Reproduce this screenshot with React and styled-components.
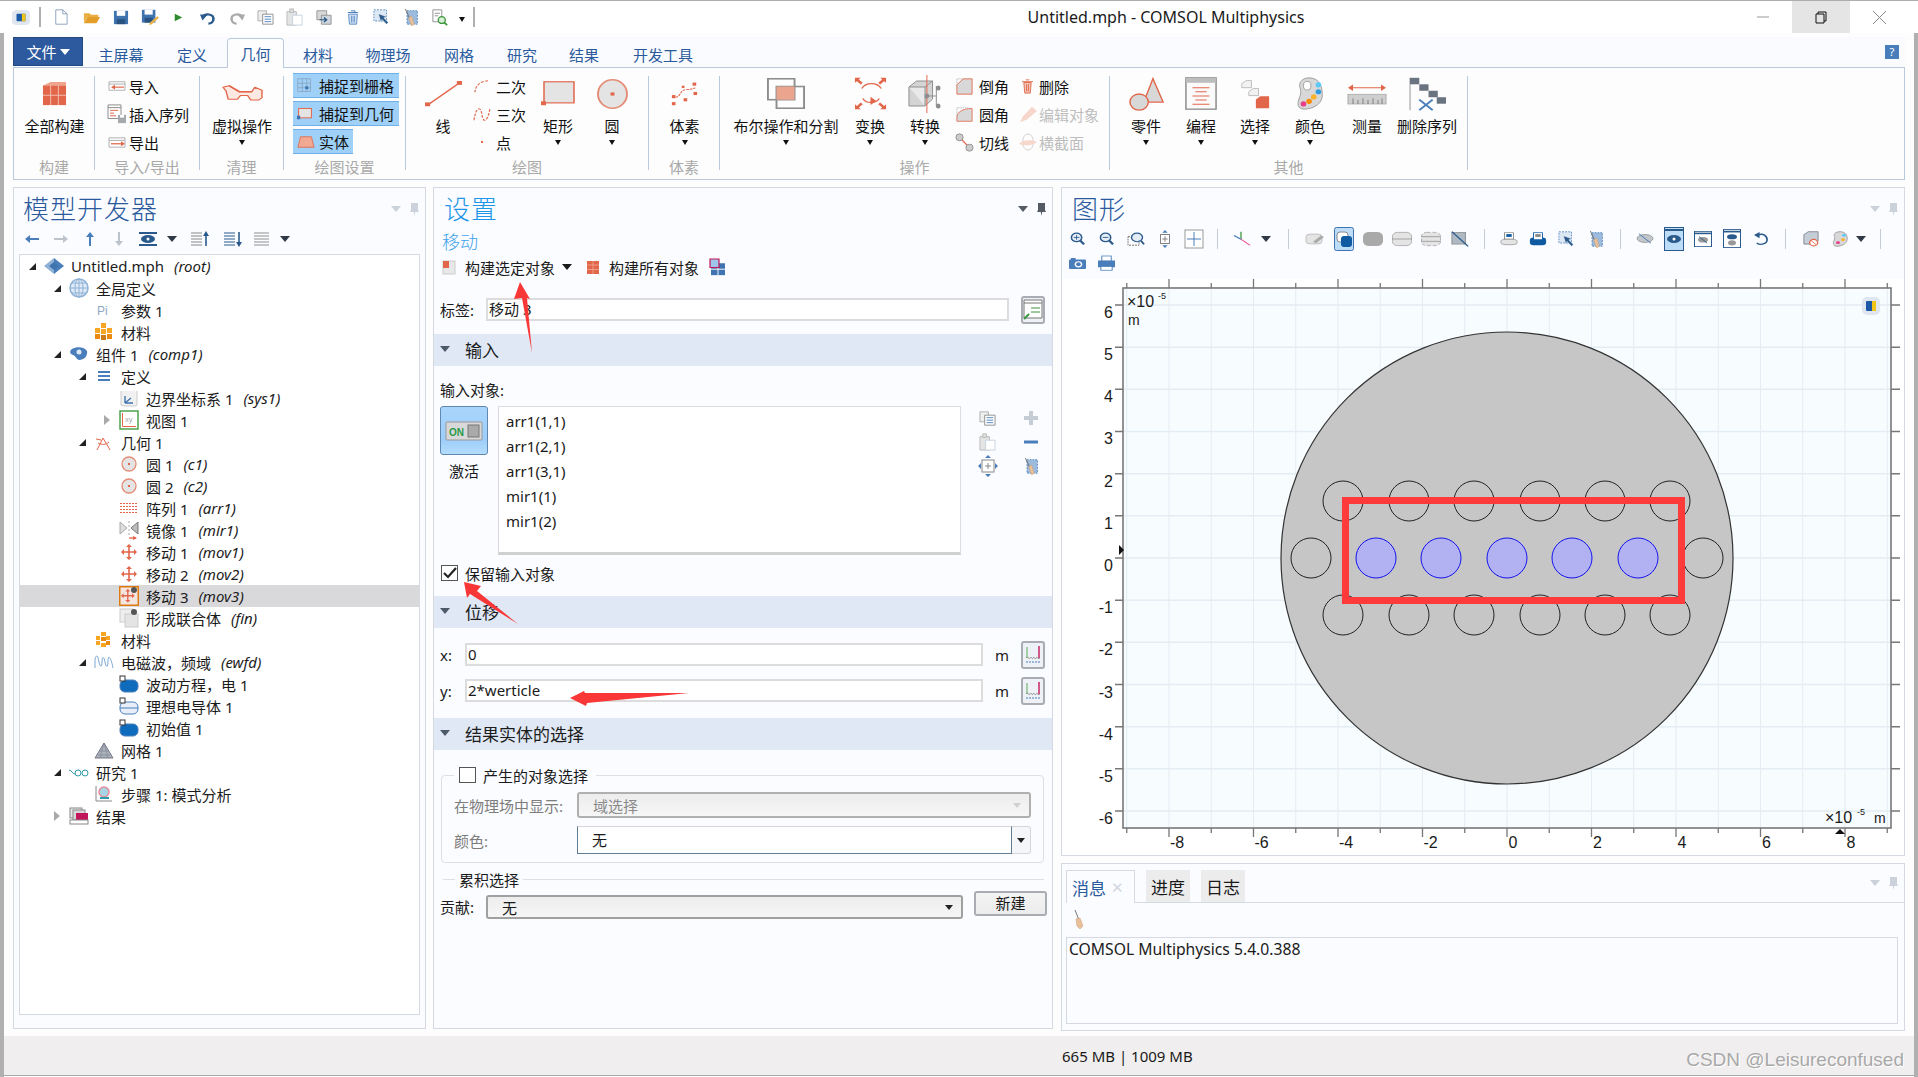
import React from 'react';
import styled, { createGlobalStyle } from 'styled-components';

const FONT = `"Noto Sans", "Noto Sans CJK SC", sans-serif`;
const R = '#e2664a';
const B = '#4a7ebb';
const DB = '#2a5a8c';

const GlobalStyle = createGlobalStyle`
  html, body { margin: 0; padding: 0; background: #fff; }
  body { font-family: ${FONT}; font-size: 15px; color: #1a1a1a; }
  * { box-sizing: border-box; }
`;

const broom = (
  <>
    <rect x="5" y="3" width="13" height="15" fill="#9dbbdc" stroke={B} strokeDasharray="2 1.5" />
    <path d="M3 1l6 12" stroke="#777" strokeWidth="1.2" />
    <path d="M7 11l4-2 3 9-3 2z" fill="#e8c09a" stroke="#c99a70" strokeWidth=".5" />
  </>
);
const cross = (
  <>
    <path d="M8 1v14M1 8h14" stroke={R} strokeWidth="1.6" />
    <path d="M8 0l3 3H5zM8 16l3-3H5zM0 8l3-3v6zM16 8l-3-3v6z" fill={R} />
  </>
);
const domain = (c, line) => (
  <>
    <rect x="1" y="4" width="18" height="12" rx="5" fill={c} stroke={B} />
    {line && <path d="M1 10h18" stroke={B} />}
    <rect x="1" y="0" width="5" height="5" fill="#fff" stroke="#333" />
  </>
);
const chip = (
  <>
    <rect x="1" y="1" width="16" height="20" rx="1" fill="#eef1f5" />
    <path d="M2 14c2-3 2 2 4 0s2 2 3 0 2 2 3 0 2 2 4 0" fill="none" stroke="#888" />
    <path d="M3 3v11" stroke="#5aa85a" />
    <path d="M15 2v12" stroke="#c2185b" strokeWidth="1.4" />
    <path d="M2 18h14" stroke={B} strokeDasharray="2 1" />
  </>
);

const icons = {
  app: [20, 20, <><rect width="20" height="20" rx="5" fill="#dfe6f0" /><rect x="5" y="5" width="10" height="10" rx="1" fill="#1c5aa8" /><path d="M11 5h4v10h-4z" fill="#f0c419" /></>],
  new: [16, 20, <path d="M2 1h8l5 5v13H2zM10 1v5h5" fill="#fff" stroke="#7f97b3" />],
  open: [20, 17, <><path d="M1 3h6l2 2h8v3H5L1 15z" fill="#eaaf44" /><path d="M5 8h14l-4 8H1z" fill="#e39e2a" /></>],
  save: [17, 18, <><path d="M1 1h15v16H1z" fill="#3f74b0" /><path d="M4 1h9v6H4z" fill="#fff" /><path d="M4 11h9v6H4z" fill="#28527f" /></>],
  saveAs: [20, 20, <><path d="M1 1h15v16H1z" fill="#3f74b0" /><path d="M4 1h9v6H4z" fill="#fff" /><path d="M4 11h9v6H4z" fill="#28527f" /><path d="M10 17l8-8 2 2-8 8-3 1z" fill="#eab04c" /></>],
  run: [12, 14, <path d="M1 1l10 6-10 6z" fill="#2e8b2e" />],
  undo: [19, 20, <><path d="M4 9c2-5 12-4 12 3 0 4-3 6-6 6" fill="none" stroke={DB} strokeWidth="3" /><path d="M0 6l9 0-6 8z" fill={DB} /></>],
  redo: [19, 20, <><path d="M15 9C13 4 3 5 3 12c0 4 3 6 6 6" fill="none" stroke="#aaa" strokeWidth="3" /><path d="M19 6h-9l6 8z" fill="#aaa" /></>],
  copy: [18, 18, <><path d="M1 1h9v12H1z" fill="#eee" stroke="#aaa" /><path d="M6 5h11v12H6z" fill="#fff" stroke="#888" /><path d="M8 8h7M8 11h7M8 14h7" stroke={B} /></>],
  paste: [18, 20, <><path d="M1 4h10v15H1z" fill="#e4e4e4" stroke="#bbb" /><path d="M4 1h4v4H4z" fill="#ddd" stroke="#bbb" /><path d="M7 8h10v11H7z" fill="#fff" stroke="#c5d2e0" /></>],
  dup: [18, 20, <><path d="M1 1h11v12H1z" fill="#d8d8d8" stroke="#888" /><path d="M6 7h11v12H6z" fill="#cfd5db" stroke="#888" /><path d="M4 13h8M9 10l3 3-3 3" fill="none" stroke={DB} strokeWidth="1.6" /></>],
  trash: [15, 18, <><path d="M2 5h11l-1 12H3z" fill="#cfe0f2" stroke={B} /><path d="M1 3h13M5 1h5v2M6 7v8M9 7v8" fill="none" stroke={B} strokeWidth="1.2" /></>],
  selBox: [20, 20, <><rect x="1" y="1" width="14" height="14" fill="#dce8f4" stroke={B} strokeDasharray="2 1.5" /><path d="M6 6l10 4-4 1 5 6-2 2-5-6-1 4z" fill={DB} stroke="#fff" strokeWidth=".5" /></>],
  broom: [20, 20, broom],
  find: [18, 20, <><path d="M1 1h10v14H1z" fill="#fff" stroke="#888" /><path d="M3 5h6M3 8h4" stroke="#888" /><circle cx="11" cy="13" r="4" fill="#d8efd8" stroke="#3c963c" strokeWidth="1.5" /><path d="M14 16l3 3" stroke="#3c963c" strokeWidth="2" /></>],
  buildAll: [26, 28, <><path d="M1 5l8-4h16v4z" fill="#f0a48e" /><path d="M1 5h24v22H1z" fill={R} /><path d="M1 16h24M9 5v22M17 5v22" stroke="#fff" strokeWidth="1" opacity=".6" /></>],
  imp: [18, 13, <><path d="M1 1h16v11H1zM1 4h16" fill="#fff" stroke="#aaa" /><path d="M6 8h10" stroke={R} strokeWidth="1.5" /><path d="M3 8l4-3v6z" fill={R} /></>],
  exp: [18, 13, <><path d="M1 1h16v11H1zM1 4h16" fill="#fff" stroke="#aaa" /><path d="M3 8h10" stroke={R} strokeWidth="1.5" /><path d="M17 8l-4-3v6z" fill={R} /></>],
  insert: [20, 22, <><path d="M1 1h13v15H1zM1 4h13" fill="#fff" stroke="#888" /><path d="M3 7h8M3 10h4M3 13h6" stroke={R} /><path d="M11 12h8v9h-8z" fill="#a5a9ae" /><path d="M13 12h4v3h-4z" fill="#fff" /></>],
  glasses: [40, 24, <><path d="M1 3l6-2 10 8 12 0 3-6 7 4v10l-3 3H28l-3-6H18l-3 5H6L4 8z" fill="#fde9e2" stroke={R} strokeWidth="1.4" strokeLinejoin="round" /><path d="M7 1l10 8h12" fill="none" stroke={R} strokeWidth="2" /></>],
  snapGrid: [20, 20, <><path d="M1 1h17v17H1zM1 7h17M1 13h17M7 1v17M13 1v17" fill="none" stroke="#8aa0b5" /><rect x="11" y="11" width="4" height="4" fill="#3f74b0" /></>],
  snapGeo: [20, 18, <><rect x="2" y="2" width="16" height="13" fill="#e4e4e4" stroke={R} strokeWidth="1.3" /><rect x="0" y="12" width="4" height="5" fill="#3f74b0" /></>],
  solid: [20, 16, <path d="M1 15l3-14h12l3 14z" fill="#f1a993" stroke={R} strokeWidth="1" />],
  line: [36, 34, <><path d="M3 31L33 3" stroke={R} strokeWidth="1.5" /><rect x="0" y="28" width="5" height="5" fill={R} /><rect x="31" y="0" width="5" height="5" fill={R} /></>],
  quad: [18, 18, <path d="M2 16C2 8 8 2 16 2" fill="none" stroke={R} strokeWidth="1.2" strokeDasharray="3 1.5" />],
  cubic: [18, 18, <path d="M1 16C3 0 8 0 9 10s6 8 8-8" fill="none" stroke={R} strokeWidth="1.2" strokeDasharray="3 1.5" />],
  point: [18, 18, <rect x="8" y="8" width="2" height="2" fill={R} />],
  rect: [34, 32, <><rect x="3" y="1" width="30" height="27" fill="#e4e4e4" stroke={R} strokeWidth="1.5" /><rect x="0" y="26" width="5" height="5" fill={R} /></>],
  circle: [32, 38, <><ellipse cx="16" cy="19" rx="15" ry="18" fill="#e4e4e4" stroke="#e58d76" strokeWidth="2" /><rect x="14" y="17" width="4" height="4" fill={R} /></>],
  voxel: [30, 32, <><path d="M5 21c6-1 5-10 12-10s7-2 10-2" fill="none" stroke={R} strokeWidth="1.2" strokeDasharray="3 1" /><g fill={R}><rect x="1" y="18" width="4" height="4" /><rect x="1" y="27" width="4" height="4" /><rect x="14" y="22" width="4" height="4" /><rect x="24" y="2" width="4" height="4" /><rect x="25" y="14" width="4" height="4" /><rect x="12" y="6" width="3" height="3" /></g></>],
  bool: [40, 40, <><rect x="1" y="1" width="28" height="27" fill="none" stroke="#8d8d8d" strokeWidth="2" /><rect x="10" y="11" width="29" height="28" fill="none" stroke="#8d8d8d" strokeWidth="2" /><rect x="10" y="11" width="19" height="17" fill="#eba58f" /></>],
  transform: [34, 40, <><path d="M8 14c4-8 16-8 20 0M26 26c-4 7-14 6-17 0" fill="none" stroke={R} strokeWidth="1.5" /><path d="M17 24l6 5-6 5z" fill={R} /><g fill={R}><path d="M1 1h6l-2 2 4 4-2 2-4-4-2 2z" /><path d="M33 1h-6l2 2-4 4 2 2 4-4 2 2z" /><path d="M1 39h6l-2-2 4-4-2-2-4 4-2-2z" /><path d="M33 39h-6l2-2-4-4 2-2 4 4 2-2z" /></g></>],
  convert: [36, 38, <><path d="M1 12l8-6h17v18l-8 7H1z" fill="#d4d4d4" stroke="#8d8d8d" /><path d="M1 12h17v19M18 12l8-6" fill="#e9e9e9" stroke="#8d8d8d" /><path d="M20 0v38" stroke={R} /><path d="M30 11v20M20 21h10" stroke="#8d8d8d" /><circle cx="32" cy="13" r="2.5" fill="#8d8d8d" /><circle cx="32" cy="31" r="2.5" fill="#8d8d8d" /><circle cx="20" cy="21" r="2.5" fill="#8d8d8d" /></>],
  chamfer: [19, 20, <><path d="M1 8l7-7h10v18H1z" fill="#d8d8d8" stroke={R} /><path d="M1 8V1h7" fill="none" stroke="#999" strokeDasharray="1 1" /></>],
  fillet: [19, 20, <><path d="M1 19V14C1 7 7 2 18 2v17z" fill="#d8d8d8" stroke={R} /><path d="M1 14V1h13" fill="none" stroke="#999" strokeDasharray="1 1" /></>],
  tangent: [21, 22, <><path d="M5 5l11 12" stroke={R} strokeWidth="1.5" /><circle cx="5" cy="5" r="4" fill="#ccc" stroke="#8d8d8d" /><circle cx="16" cy="17" r="4" fill="#ccc" stroke="#8d8d8d" /></>],
  del: [12, 17, <><path d="M2 4h8l-1 12H3z" fill="#f1c3b5" stroke={R} /><path d="M0 3h12M4 1h4M5 6v8M7 6v8" fill="none" stroke={R} /></>],
  edit: [18, 20, <path d="M1 19l3-7L13 1l5 5-10 10z" fill="#f7d6cb" />],
  section: [20, 20, <><ellipse cx="10" cy="10" rx="6" ry="9" fill="none" stroke="#ccc" /><path d="M0 12c5-5 14-5 20-2-5 4-15 5-20 2z" fill="#f7d6cb" /></>],
  part: [38, 42, <><path d="M16 31L26 2l11 29z" fill="#d8d8d8" stroke={R} strokeWidth="1.6" /><circle cx="11" cy="31" r="10" fill="#d8d8d8" stroke={R} strokeWidth="1.6" /></>],
  prog: [34, 40, <><rect x="1" y="1" width="32" height="38" fill="#fafafa" stroke="#8d8d8d" strokeWidth="1.6" /><rect x="1" y="1" width="32" height="6" fill="#bdbdbd" /><path d="M8 13h18M11 18h12M8 23h18M11 28h12M8 33h18" stroke={R} strokeWidth="1.2" /></>],
  select: [34, 38, <><path d="M2 6l5-4h6v9H2z" fill="#f2f2f2" stroke="#b5b5b5" /><path d="M10 16l5-4h6v9H10z" fill="#f2f2f2" stroke="#b5b5b5" /><path d="M18 26l5-4h10v15H18z" fill={R} /></>],
  palette: [30, 38, <><path d="M14 1c12 0 15 12 14 22-1 9-11 14-19 14S1 30 4 23c2-5 1-8 0-12C3 5 8 1 14 1z" fill="#d8d8d8" stroke="#9a9a9a" /><ellipse cx="12" cy="10" rx="4" ry="5" fill="#fff" stroke="#999" /><circle cx="24" cy="9" r="3" fill="#5ac8fa" /><circle cx="24" cy="17" r="3" fill="#2b9be3" /><circle cx="19" cy="23" r="3" fill="#f7b32b" /><circle cx="14" cy="28" r="3" fill="#fb8c00" /><circle cx="8" cy="31" r="3" fill="#e83e8c" /></>],
  measure: [38, 26, <><path d="M2 6h34" stroke={R} strokeWidth="1.3" /><path d="M0 6l5-4v8zM38 6l-5-4v8z" fill={R} /><rect y="14" width="38" height="12" fill="#cfcfcf" stroke="#aaa" /><path d="M5 19v7M10 21v5M15 19v7M20 21v5M25 19v7M30 21v5M34 19v7" stroke="#777" /></>],
  delSeq: [36, 42, <><path d="M1 1v40" stroke="#999" /><g fill="#6a7480"><rect x="1" y="1" width="9" height="8" /><rect x="10" y="9" width="9" height="8" /><rect x="19" y="17" width="9" height="8" /><rect x="27" y="25" width="9" height="8" /></g><path d="M10 28l13 13M23 28L10 41" stroke={B} strokeWidth="2" /></>],
  leftA: [14, 8, <><path d="M4 4h10" stroke={B} strokeWidth="2" /><path d="M0 4l5-4v8z" fill={B} /></>],
  rightA: [14, 8, <><path d="M0 4h10" stroke="#bcc3cb" strokeWidth="2" /><path d="M14 4L9 0v8z" fill="#bcc3cb" /></>],
  upA: [8, 14, <><path d="M4 4v10" stroke={B} strokeWidth="2" /><path d="M4 0L0 5h8z" fill={B} /></>],
  downA: [8, 14, <><path d="M4 0v10" stroke="#bcc3cb" strokeWidth="2" /><path d="M4 14L0 9h8z" fill="#bcc3cb" /></>],
  eye: [18, 14, <><path d="M0 1h18M0 13h18" stroke={DB} strokeWidth="2" /><ellipse cx="9" cy="7" rx="7" ry="4" fill={DB} /><circle cx="9" cy="7" r="1.5" fill="#fff" /></>],
  listUp: [20, 16, <><path d="M1 2h11M1 5h11M1 8h11M1 11h11M1 14h11" stroke="#888" /><path d="M16 15V4" stroke={DB} strokeWidth="1.6" /><path d="M16 0l-3 5h6z" fill={DB} /></>],
  listDown: [20, 16, <><path d="M1 2h11M1 5h11M1 8h11M1 11h11M1 14h11" stroke={DB} /><path d="M16 1v11" stroke={DB} strokeWidth="1.6" /><path d="M16 16l-3-5h6z" fill={DB} /></>],
  listAll: [17, 16, <path d="M1 2h15M1 5h15M1 8h15M1 11h15M1 14h15" stroke="#8f8f8f" />],
  root: [20, 16, <><path d="M10 0l10 8-10 8z" fill={B} /><path d="M10 0L0 8l10 8z" fill="#8fb2d6" /><path d="M5 8l5-4 5 4-5 4z" fill="#3f74b0" /></>],
  globe: [20, 20, <><circle cx="10" cy="10" r="9" fill="#dde9f6" stroke="#8fb2d6" strokeWidth="1.5" /><path d="M1 10h18M10 1v18M3 5h14M3 15h14" stroke="#8fb2d6" fill="none" /><ellipse cx="10" cy="10" rx="4" ry="9" fill="none" stroke="#8fb2d6" /></>],
  pi: [16, 14, <text x="1" y="12" fontFamily="Liberation Sans" fontSize="12" fill="#8fa8c8">Pi</text>],
  mats: [18, 18, <g fill="#f6a623"><rect x="0" y="5" width="5" height="5" /><rect x="6" y="0" width="5" height="5" /><rect x="12" y="5" width="5" height="5" /><rect x="0" y="11" width="5" height="5" fill="#e88b10" /><rect x="6" y="6" width="5" height="5" /><rect x="12" y="11" width="5" height="5" fill="#e88b10" /><rect x="6" y="12" width="5" height="5" fill="#c97a1a" /></g>],
  matsS: [16, 16, <g fill="#f6a623"><rect x="5" y="0" width="5" height="4" /><rect x="0" y="4" width="4" height="4" /><rect x="10" y="4" width="4" height="4" /><rect x="5" y="5" width="5" height="4" fill="#e88b10" /><rect x="0" y="9" width="4" height="4" /><rect x="10" y="9" width="4" height="4" fill="#e88b10" /><rect x="5" y="11" width="5" height="4" /></g>],
  comp: [18, 14, <><path d="M2 2c5-3 13-2 15 2 1 5-3 9-8 9-3-1-3-4-6-5S-1 4 2 2z" fill={B} /><circle cx="9" cy="5" r="2.5" fill="#dce8f4" /></>],
  defs: [14, 12, <path d="M1 2h12M1 6h12M1 10h12" stroke={B} strokeWidth="2" />],
  sys: [18, 18, <><path d="M1 2v14l3 1h11l2-1V2" fill="#f1f1f1" stroke="#ccc" /><path d="M5 14V7M5 14h8M5 14l6-5" stroke="#3f74b0" strokeWidth="1.4" fill="none" /></>],
  view: [20, 20, <><rect x="1" y="1" width="18" height="18" fill="#fff" stroke="#4da34d" strokeWidth="1.5" /><path d="M3.5 3v13.500H17" stroke={R} fill="none" /><text x="6" y="12" fontFamily="Liberation Sans" fontSize="7.5" fill="#aaa">xy</text></>],
  geom: [18, 18, <path d="M8 5L2 17M8 5l7 12M1 6l5 1M3 10c4 2 8 2 11-1" fill="none" stroke={R} strokeWidth="1" />],
  geomC: [16, 16, <><circle cx="8" cy="8" r="7" fill="#e4e4e4" stroke="#e58d76" strokeWidth="1.3" /><rect x="7" y="7" width="2" height="2" fill={R} /></>],
  arr: [18, 12, <g stroke={R} strokeDasharray="2 1"><path d="M0 1.5h18M0 4.5h18M0 7.5h18M0 10.5h18" /></g>],
  mirror: [20, 20, <><path d="M1 2l7 6-7 6z" fill="#ddd" stroke="#aaa" /><path d="M19 2l-7 6 7 6z" fill="#bbb" stroke="#777" /><path d="M10 1v15" stroke="#aaa" strokeDasharray="2 2" /><path d="M10 18h7" stroke={R} strokeWidth="1.3" /><path d="M18 18l-4-2v4z" fill={R} /></>],
  move: [16, 16, cross],
  moveSel: [20, 20, <><rect x=".75" y=".75" width="18.5" height="18.5" fill="#f3e6e1" stroke="#e07a10" strokeWidth="1.5" /><g transform="translate(2 3)scale(.85)">{cross}</g><circle cx="15" cy="4" r="3" fill="#555" /></>],
  union: [20, 20, <><rect x="1" y="1" width="13" height="13" fill="#eee" stroke="#ccc" /><rect x="6" y="6" width="13" height="13" fill="#e4e4e4" stroke="#ccc" /><circle cx="15" cy="4" r="3" fill="#555" /></>],
  wave: [20, 14, <path d="M1 13V4c2-6 3-2 4 3s3 6 3 0 2-6 3 0 3 6 3-1 3-4 5 7" fill="none" stroke="#7aa7d4" strokeWidth="1" />],
  domFull: [20, 16, domain('#0f6cbd')],
  domLine: [20, 16, domain('#e8eff8', true)],
  mesh: [20, 17, <><path d="M10 1l9 15H1z" fill="#aab2bb" stroke="#778" /><path d="M6 9h8M4 13h12M10 1L6 16M10 1l4 15" stroke="#778" strokeWidth=".5" /></>],
  study: [20, 10, <><path d="M0 3c3 0 3 4 6 4" fill="none" stroke="#2e9aa8" /><circle cx="9" cy="6" r="3" fill="none" stroke="#2e9aa8" /><circle cx="16" cy="6" r="3" fill="none" stroke="#2e9aa8" /></>],
  step: [18, 18, <><path d="M1 1v15h16" fill="none" stroke="#888" /><circle cx="9" cy="7" r="5" fill="#a6d4e2" stroke="#e58d9a" strokeWidth="1.5" /><path d="M5 13h9" stroke="#2e9aa8" strokeWidth="2" /></>],
  results: [20, 18, <><rect x="1" y="1" width="12" height="10" fill="#e8e8e8" stroke="#888" /><rect x="4" y="3" width="12" height="10" fill="#d8d8d8" stroke="#888" /><rect x="7" y="6" width="12" height="7" fill="#c2185b" /><rect x="1" y="13" width="18" height="4" fill="#fff" stroke="#888" /></>],
  buildSel: [12, 13, <><rect x="0" y="0" width="12" height="13" fill="#e8e8e8" stroke="#ccc" /><rect x="0" y="0" width="6" height="7" fill={R} /></>],
  buildAllS: [12, 13, <><rect width="12" height="13" fill={R} /><path d="M0 4h12M0 8.5h12M6 0v13" stroke="#f3b3a0" strokeWidth=".7" /></>],
  buildInd: [16, 20, <><rect x="1" y="5" width="14" height="14" fill="#3f74b0" /><path d="M1 12h14M8 5v14" stroke="#fff" /><rect x="0" y="0" width="9" height="10" fill="#9fc5ea" stroke="#c2185b" strokeWidth="1.2" /></>],
  labelBtn: [20, 22, <><path d="M1 1h18v18H1zM1 4h18" fill="#fff" stroke="#777" /><path d="M8 9h9M8 13h9" stroke="#3c963c" /><path d="M1 20l5-5" stroke="#3c963c" strokeWidth="2" /></>],
  toggle: [38, 20, <><rect x="1" y="1" width="36" height="18" rx="1" fill="#d8d8d8" stroke="#999" /><text x="4" y="14.5" fontFamily="Liberation Sans" fontWeight="700" fontSize="10" fill="#2a9a4a">ON</text><rect x="23" y="4" width="11" height="12" fill="#aaa" stroke="#777" /></>],
  addPlus: [14, 14, <path d="M7 0v14M0 7h14" stroke="#c6ccd4" strokeWidth="4" />],
  minus: [14, 6, <path d="M0 3h14" stroke={B} strokeWidth="3" />],
  focus: [20, 22, <><rect x="4" y="5" width="12" height="12" fill="#fff" stroke="#888" /><path d="M10 8v6M7 11h6" stroke="#888" /><path d="M10 0l3 3H7zM10 22l3-3H7zM0 11l3-3v6zM20 11l-3-3v6z" fill={B} /></>],
  check: [14, 12, <path d="M1 6l4 4 8-9" fill="none" stroke="#222" strokeWidth="2.2" />],
  tiny: [18, 22, chip],
  zoomIn: [16, 18, <><circle cx="7" cy="7" r="5.5" fill="#e4ecf5" stroke={DB} strokeWidth="1.6" /><path d="M11 11l4 5" stroke={DB} strokeWidth="2.5" /><path d="M7 4v6M4 7h6" stroke={DB} /></>],
  zoomOut: [16, 18, <><circle cx="7" cy="7" r="5.5" fill="#e4ecf5" stroke={DB} strokeWidth="1.6" /><path d="M11 11l4 5" stroke={DB} strokeWidth="2.5" /><path d="M4 7h6" stroke={DB} /></>],
  zoomBox: [18, 18, <><rect x="1" y="6" width="11" height="11" fill="none" stroke="#666" strokeDasharray="2 1" /><circle cx="10" cy="7" r="5.5" fill="#e4ecf5" stroke={DB} strokeWidth="1.4" /><path d="M14 11l3 5" stroke={DB} strokeWidth="2" /></>],
  zoomFit: [18, 20, <><rect x="4" y="5" width="10" height="10" fill="#fff" stroke="#777" /><path d="M9 7v6M6 10h6" stroke="#777" /><path d="M9 0l3 3H6zM9 20l3-3H6z" fill={B} /></>],
  zoomExt: [20, 20, <><rect x="1" y="1" width="18" height="18" fill="#fff" stroke="#999" /><path d="M10 3v14M3 10h14" stroke={B} /></>],
  axes: [20, 20, <><path d="M10 11V1" stroke="#3c963c" strokeWidth="1.3" /><path d="M10 11L3 6" stroke={B} strokeWidth="1.3" /><path d="M10 11l9 8" stroke="#e83e8c" strokeWidth="1.3" /></>],
  gEdit: [20, 20, <><rect x="1" y="3" width="16" height="14" rx="4" fill="#e4e4e4" stroke="#bbb" /><path d="M8 14l8-9 3 2-8 9z" fill="#aaa" /></>],
  gCutSel: [20, 24, <><rect x=".5" y=".5" width="19" height="23" rx="2" fill="#bcdcf7" stroke="#3f74b0" /><rect x="3" y="5" width="11" height="10" rx="3" fill="#fff" stroke="#888" /><rect x="7" y="9" width="11" height="11" rx="3" fill="#0f5aa0" /></>],
  gFill: [20, 18, <rect x="0" y="0" width="20" height="18" rx="6" fill="#a9a9a9" />],
  gBand: [20, 18, <><rect x=".5" y=".5" width="19" height="17" rx="5" fill="#e4e4e4" stroke="#aaa" /><path d="M0 9h20" stroke="#999" /></>],
  gBand2: [20, 18, <><rect x=".5" y=".5" width="19" height="17" rx="5" fill="#e4e4e4" stroke="#aaa" strokeDasharray="4 2" /><path d="M0 6h20M0 12h20" stroke="#999" /></>],
  gSlash: [20, 22, <><rect x="1" y="2" width="15" height="16" fill="#aeb9c4" stroke="#888" /><path d="M1 1l18 20" stroke={DB} strokeWidth="1.6" /></>],
  gBoxA: [20, 20, <><path d="M1 13c0-4 18-4 18 0v3c0 3-18 3-18 0z" fill="#e4e4e4" stroke="#999" /><rect x="5" y="1" width="10" height="9" fill="#fff" stroke="#888" /><rect x="7" y="3" width="6" height="4" fill="#0f5aa0" /></>],
  gBoxB: [20, 20, <><rect x="1" y="8" width="18" height="11" rx="4" fill="#0f5aa0" /><rect x="5" y="1" width="10" height="10" fill="#fff" stroke="#0f5aa0" /><rect x="7" y="3" width="6" height="4" fill="#888" /></>],
  gEyeOff: [18, 14, <><ellipse cx="9" cy="7" rx="8" ry="5" fill="#c2c7cc" stroke="#999" /><path d="M3 1l12 12" stroke="#3f74b0" /></>],
  gEyeA: [20, 24, <><rect x=".5" y=".5" width="19" height="23" fill="#bcdcf7" stroke={DB} /><path d="M0 3h20" stroke={DB} strokeWidth="2" /><ellipse cx="10" cy="12" rx="7" ry="4" fill={DB} /><circle cx="10" cy="12" r="1.5" fill="#fff" /></>],
  gEyeB: [18, 20, <><rect x=".5" y=".5" width="17" height="19" fill="#fff" stroke={DB} /><path d="M0 3h18" stroke={DB} strokeWidth="2" /><ellipse cx="9" cy="11" rx="5" ry="3.5" fill="#999" /><path d="M5 7l8 8" stroke={DB} /></>],
  gEyeC: [18, 22, <><rect x=".5" y=".5" width="17" height="21" fill="#fff" stroke={DB} /><path d="M0 3h18" stroke={DB} strokeWidth="2" /><ellipse cx="9" cy="9" rx="5" ry="3" fill={DB} /><ellipse cx="9" cy="16" rx="4" ry="3" fill="#999" /></>],
  gReset: [16, 18, <><path d="M5 4c6-3 10 1 10 6s-7 8-11 4" fill="none" stroke={DB} strokeWidth="1.8" /><path d="M1 4l6-4v8z" fill={DB} /></>],
  gBan: [18, 22, <><path d="M1 5l5-4h11v13l-5 4H1z" fill="#c5ced6" stroke="#778" /><circle cx="12" cy="16" r="4.5" fill="#fff" stroke={R} strokeWidth="1.5" /><path d="M9 13l6 6" stroke={R} /></>],
  gPalette: [16, 22, <><path d="M8 1c6 0 8 6 7 12-1 5-6 8-10 8S1 17 2 13c1-3 1-5 0-7 0-3 3-5 6-5z" fill="#d8d8d8" stroke="#999" /><circle cx="12" cy="6" r="2" fill="#5ac8fa" /><circle cx="11" cy="12" r="2" fill="#f7b32b" /><circle cx="6" cy="16" r="2" fill="#e83e8c" /></>],
  camera: [18, 14, <><rect y="2" width="18" height="12" rx="1" fill={B} /><rect x="2" y="0" width="5" height="3" fill={B} /><circle cx="10" cy="8" r="4" fill="#fff" /><circle cx="10" cy="8" r="2.5" fill={B} /></>],
  printer: [18, 20, <><rect x="4" y="0" width="10" height="7" fill="#fff" stroke={B} /><rect y="6" width="18" height="9" fill={B} /><rect x="3" y="14" width="12" height="5" fill="#fff" stroke={B} /></>],
  broomOnly: [12, 20, <><path d="M2 0l4 10" stroke="#777" /><path d="M3 9l4-1 3 8-3 3-3-3z" fill="#e8c09a" stroke="#c99a70" strokeWidth=".5" /></>],
  pin: [9, 13, <path d="M1 0h7v7l1 2H5.200l-.7 4-.7-4H0l1-2z" fill="currentColor" />],
  tri: [12, 7, <path d="M0 0h12L6 7z" fill="currentColor" />],
};

// drawn size of an icon where it differs from its viewBox
const sizes = {
  app: [18, 15], new: [14, 16], open: [18, 13], save: [16, 15], saveAs: [18, 16], run: [9, 9],
  undo: [16, 15], redo: [16, 15], copy: [17, 15], paste: [17, 18], dup: [16, 15], trash: [12, 15],
  selBox: [18, 16], broom: [16, 18], find: [16, 17],
  buildAll: [25, 25], imp: [18, 10], exp: [18, 11], insert: [20, 20], glasses: [41, 18],
  snapGrid: [15, 15], snapGeo: [16, 13], solid: [18, 12],
  line: [37, 26], quad: [18, 15], cubic: [18, 16], rect: [34, 25], circle: [31, 30], voxel: [27, 25],
  bool: [38, 31], transform: [33, 33], convert: [34, 38],
  chamfer: [17, 17], fillet: [17, 15], tangent: [19, 19], del: [11, 15], edit: [18, 17], section: [18, 18],
  part: [35, 34], prog: [32, 33], select: [30, 30], palette: [28, 33], measure: [38, 21], delSeq: [37, 34],
  buildInd: [16, 17],
  zoomIn: [15, 14], zoomOut: [15, 14], zoomBox: [18, 14], zoomFit: [16, 18], axes: [20, 15],
  gEdit: [20, 14], gFill: [20, 14], gBand: [20, 14], gBand2: [20, 14], gSlash: [18, 16],
  gBoxA: [18, 14], gBoxB: [18, 14], gEyeOff: [18, 11], gEyeB: [18, 16], gEyeC: [18, 19],
  gReset: [15, 14], gBan: [16, 16], gPalette: [16, 16], camera: [17, 11], printer: [17, 15],
  tri: [10, 6],
};

const Svg = styled.svg`
  display: block;
  flex: none;
  overflow: visible;
`;

const Icon = ({ n }) => {
  const [w, h, body] = icons[n];
  const [dw, dh] = sizes[n] || [w, h];
  return (
    <Svg width={dw} height={dh} viewBox={`0 0 ${w} ${h}`} preserveAspectRatio="none">
      {body}
    </Svg>
  );
};

const Window = styled.div`
  position: relative;
  width: 1918px;
  height: 1077px;
  overflow: hidden;
  background: #fff;
  border-top: 1px solid #adadad;
`;

const TitleBar = styled.div`
  height: 32px;
  display: flex;
  align-items: center;
  position: relative;
`;

const QuickBar = styled.div`
  display: flex;
  align-items: center;
  padding-left: 6px;
`;

const QuickCell = styled.div`
  width: ${(p) => p.$w || 29}px;
  display: flex;
  justify-content: center;
  align-items: center;
`;

const QuickSep = styled.div`
  width: 2px;
  height: 20px;
  background: #b0b0b0;
  margin: 0 ${(p) => p.$m || 0}px;
`;

const WindowTitle = styled.div`
  flex: 1;
  font-size: 16px;
  text-align: center;
  color: #1a1a1a;
  padding-left: 120px;
  white-space: nowrap;
`;

const WinButton = styled.div`
  width: 58px;
  height: 32px;
  display: flex;
  align-items: center;
  justify-content: center;
  background: ${(p) => (p.$on ? '#e5e5e5' : 'transparent')};
`;

const WinControls = styled.div`
  display: flex;
  align-items: center;
  padding-right: 10px;
`;

const Body = styled.div`
  height: 1044px;
  display: flex;
  flex-direction: column;
  border-left: 4px solid #b0b0b0;
  border-right: 4px solid #b0b0b0;
  padding-top: 4px;
  background: #fdfdfe;
`;

const TabBar = styled.div`
  height: 30px;
  flex: none;
  margin: 0 9px;
  display: flex;
  align-items: flex-end;
  background: #f9fbff;
  position: relative;
`;

const FileTab = styled.div`
  width: 70px;
  height: 29px;
  margin-bottom: 1px;
  background: #2d5a9e;
  border: 1px solid #24497f;
  color: #fff;
  font-size: 15px;
  display: flex;
  align-items: center;
  justify-content: center;
  gap: 3px;
`;

const Tab = styled.div`
  width: ${(p) => p.$w}px;
  margin-left: ${(p) => p.$ml || 0}px;
  height: ${(p) => (p.$active ? 29 : 26)}px;
  display: flex;
  align-items: center;
  justify-content: center;
  font-size: 15px;
  color: #2a5a9c;
  white-space: nowrap;
  ${(p) =>
    p.$active &&
    `
    background: #fdfdfd;
    border: 1px solid #b8cadb;
    border-bottom: none;
    border-radius: 4px 4px 0 0;
    margin-bottom: -1px;
    position: relative;
    z-index: 2;
    height: 30px;
  `}
`;

const HelpBtn = styled.div`
  margin-left: auto;
  margin-right: 6px;
  margin-bottom: 8px;
  width: 14px;
  height: 14px;
  background: ${B};
  color: #fff;
  font-size: 11px;
  line-height: 14px;
  text-align: center;
`;

const Ribbon = styled.div`
  height: 113px;
  flex: none;
  margin: 0 9px;
  padding-top: 8px;
  display: flex;
  background: #fdfdfd;
  border: 1px solid #b8cadb;
`;

const RibbonGroup = styled.div`
  width: ${(p) => p.$w}px;
  height: 94px;
  flex: none;
  display: flex;
  flex-direction: column;
  border-right: 1px solid #b8cadb;
`;

const GroupBody = styled.div`
  height: 81px;
  flex: none;
  display: flex;
  padding-left: ${(p) => p.$pl || 0}px;
`;

const GroupLabel = styled.div`
  height: 20px;
  flex: none;
  line-height: 20px;
  text-align: center;
  color: #a9a9a9;
  font-size: 15px;
  white-space: nowrap;
`;

const BigBtn = styled.div`
  width: ${(p) => p.$w}px;
  margin-left: ${(p) => p.$ml || 0}px;
  display: flex;
  flex-direction: column;
  align-items: center;
  flex: none;
`;

const BigIcon = styled.div`
  height: 35px;
  display: flex;
  align-items: center;
  justify-content: center;
`;

const BigText = styled.div`
  height: 20px;
  margin-top: 5px;
  line-height: 20px;
  font-size: 15px;
  color: #111;
  white-space: nowrap;
`;

const DropMark = styled.div`
  margin-top: 4px;
  width: 0;
  height: 0;
  border-left: 3.5px solid transparent;
  border-right: 3.5px solid transparent;
  border-top: 5px solid #111;
`;

const SmallCol = styled.div`
  width: ${(p) => p.$w}px;
  margin-left: ${(p) => p.$ml || 0}px;
  flex: none;
  margin-top: -4px;
  display: flex;
  flex-direction: column;
`;

const SmallBtn = styled.div`
  height: 28px;
  display: flex;
  align-items: center;
  font-size: 15px;
  white-space: nowrap;
  color: ${(p) => (p.$off ? '#bdbdbd' : '#111')};
`;

const SmallIcon = styled.div`
  width: ${(p) => p.$w}px;
  flex: none;
  display: flex;
  justify-content: center;
`;

const SnapCol = styled.div`
  margin-top: -3px;
  padding-left: 9px;
  display: flex;
  flex-direction: column;
  align-items: flex-start;
  gap: 3px;
`;

const SnapBtn = styled.div`
  width: ${(p) => p.$w}px;
  height: 25px;
  display: flex;
  align-items: center;
  padding-left: 4px;
  background: #9ed0f8;
  border-top: 1px solid #6fb0e8;
  border-bottom: 1px solid #6fb0e8;
  font-size: 15px;
  white-space: nowrap;
  color: #111;
`;

const SnapIcon = styled.div`
  width: 22px;
  flex: none;
`;

const Workspace = styled.div`
  display: flex;
  gap: 7px;
  margin: 7px 9px 0;
  height: 850px;
  flex: none;
`;

const Panel = styled.section`
  width: ${(p) => p.$w}px;
  height: ${(p) => (p.$h ? `${p.$h}px` : '842px')};
  flex: none;
  display: flex;
  flex-direction: column;
  background: #fbfcff;
  border: 1px solid #d5dae2;
`;

const RightCol = styled.div`
  width: 844px;
  margin-left: 1px;
  display: flex;
  flex-direction: column;
  gap: 7px;
`;

const PanelHead = styled.div`
  height: ${(p) => p.$h}px;
  flex: none;
  display: flex;
  align-items: center;
  justify-content: space-between;
  padding: ${(p) => p.$pt || 0}px ${(p) => p.$pr || 6}px 0 ${(p) => p.$pl || 9}px;
`;

const PanelTitle = styled.h2`
  margin: 0;
  font-size: 26px;
  font-weight: 300;
  line-height: 1.1;
  color: ${(p) => p.$color || '#2a5a9c'};
  letter-spacing: 1px;
`;

const PanelTools = styled.div`
  display: flex;
  align-items: center;
  gap: 9px;
  color: ${(p) => (p.$dark ? '#555b63' : '#cbd2db')};
`;

const IconBar = styled.div`
  height: ${(p) => p.$h || 24}px;
  flex: none;
  display: flex;
  flex-wrap: wrap;
  align-items: center;
  align-content: flex-start;
  padding-left: ${(p) => p.$pl || 0}px;
`;

const IconCell = styled.div`
  width: ${(p) => p.$w || 29}px;
  height: 25px;
  display: flex;
  align-items: center;
  justify-content: center;
  color: #2f3a46;
`;

const BarSep = styled.div`
  width: ${(p) => p.$w}px;
  height: 25px;
  display: flex;
  justify-content: center;
  align-items: center;
  &::before {
    content: '';
    width: 1px;
    height: 20px;
    background: #c6ccd4;
  }
`;

const TreeBox = styled.div`
  flex: none;
  height: 761px;
  margin: 4px 5px 0;
  background: #fff;
  border: 1px solid #d5dae2;
`;

const TreeRow = styled.div`
  height: 22px;
  display: flex;
  align-items: center;
  padding-left: ${(p) => 4 + p.$level * 25}px;
  font-size: 15px;
  white-space: nowrap;
  background: ${(p) => (p.$sel ? '#d9d9db' : 'transparent')};
  color: #1c1c1c;
`;

const TreeToggle = styled.div`
  width: 16px;
  display: flex;
  justify-content: center;
`;

const TreeIcon = styled.div`
  width: 31px;
  margin-left: -2px;
  display: flex;
  justify-content: center;
`;

const TreeText = styled.span`
  margin-left: 2px;
`;

const TreeTag = styled.i`
  margin-left: 10px;
  font-style: italic;
`;

const Opened = styled.div`
  width: 0;
  height: 0;
  border-left: 7px solid transparent;
  border-bottom: 7px solid #222;
`;

const Closed = styled.div`
  width: 0;
  height: 0;
  border-top: 5px solid transparent;
  border-bottom: 5px solid transparent;
  border-left: 6px solid #aaa;
`;

const Subtitle = styled.div`
  height: 24px;
  padding-left: 8px;
  font-size: 18px;
  line-height: 24px;
  font-weight: 300;
  color: #3ea2ec;
`;

const BuildBar = styled.div`
  height: 26px;
  display: flex;
  align-items: center;
  padding-left: 9px;
  font-size: 15px;
`;

const BuildItem = styled.div`
  display: flex;
  align-items: center;
  gap: 10px;
  margin-left: ${(p) => p.$ml || 0}px;
`;

const FormRow = styled.div`
  display: flex;
  align-items: center;
  height: ${(p) => p.$h || 23}px;
  margin-top: ${(p) => p.$mt || 0}px;
  padding: 0 7px 0 6px;
  font-size: 15px;
  position: relative;
`;

const RowLabel = styled.div`
  width: ${(p) => p.$w}px;
  flex: none;
  color: ${(p) => (p.$muted ? '#7d7d7d' : '#1a1a1a')};
  white-space: nowrap;
`;

const TextField = styled.div`
  flex: 1;
  height: 23px;
  padding: 0 1px;
  background: #fff;
  border: 2px solid #dcdcdc;
  line-height: 19px;
  font-size: 15px;
  white-space: nowrap;
`;

const Unit = styled.div`
  width: 38px;
  flex: none;
  text-align: center;
`;

const SquareBtn = styled.div`
  width: 24px;
  height: 28px;
  flex: none;
  display: flex;
  align-items: center;
  justify-content: center;
  background: #eef1f5;
  border: 2px solid #a9adb3;
  border-radius: 3px;
  margin-left: ${(p) => p.$ml || 0}px;
`;

const SectionHead = styled.div`
  height: 32px;
  margin-top: ${(p) => p.$mt}px;
  display: flex;
  align-items: center;
  gap: 15px;
  padding: 0 0 2px 6px;
  background: #dfe8f4;
  font-size: 17px;
  color: #1c1c1c;
  flex: none;
  & > svg { color: #4d5966; }
`;

const InputArea = styled.div`
  display: flex;
  margin-top: 7px;
  padding-left: 6px;
`;

const ToggleCol = styled.div`
  width: 58px;
  flex: none;
  display: flex;
  flex-direction: column;
  align-items: flex-start;
`;

const ToggleBtn = styled.div`
  width: 48px;
  height: 49px;
  display: flex;
  align-items: center;
  justify-content: center;
  background: linear-gradient(#a9d5fb, #9dcdf9 70%, #b5dcfc);
  border: 1px solid #5f88b0;
  border-radius: 3px;
`;

const ToggleText = styled.div`
  width: 48px;
  margin-top: 5px;
  text-align: center;
  font-size: 15px;
`;

const ObjectList = styled.div`
  width: 468px;
  height: 149px;
  padding: 2px 7px;
  background: #fff;
  border: 1px solid #dcdcdc;
  border-bottom: 3px solid #d0d0d0;
`;

const ObjectItem = styled.div`
  height: 25px;
  line-height: 25px;
  font-size: 15px;
`;

const ListTools = styled.div`
  display: grid;
  grid-template-columns: 43px 43px;
  grid-auto-rows: 24px;
  justify-items: center;
  align-items: center;
  margin-left: 5px;
`;

const CheckRow = styled.label`
  display: flex;
  align-items: center;
  gap: 7px;
  height: 18px;
  margin-top: ${(p) => p.$mt || 0}px;
  padding-left: ${(p) => p.$pl || 0}px;
  font-size: 15px;
  white-space: nowrap;
`;

const CheckBox = styled.span`
  width: 17px;
  height: 16px;
  display: flex;
  align-items: center;
  justify-content: center;
  background: #fff;
  border: 1px solid #555;
`;

const Fields = styled.fieldset`
  margin: 16px 8px 0 7px;
  padding: 8px 12px 8px 12px;
  height: 97px;
  border: 1px solid #dcdfe4;
  border-radius: 4px;
  min-width: 0;
`;

const FieldsLegend = styled.legend`
  padding: 0 8px 0 5px;
  margin-left: 0;
`;

const FieldRow = styled.div`
  display: flex;
  align-items: center;
  height: ${(p) => p.$h}px;
  margin-top: ${(p) => p.$mt || 0}px;
  font-size: 15px;
`;

const Combo = styled.div`
  flex: 1;
  height: ${(p) => p.$h}px;
  display: flex;
  align-items: center;
  padding: 0 8px 0 14px;
  justify-content: space-between;
  background: linear-gradient(#ededed, #f6f6f6);
  border: 2px solid ${(p) => (p.$off ? '#b0b0b0' : '#a0a0a0')};
  border-radius: 3px;
  color: ${(p) => (p.$off ? '#8a8a8a' : '#1a1a1a')};
  font-size: 15px;
`;

const ComboCaret = styled.span`
  width: 0;
  height: 0;
  border-left: 4px solid transparent;
  border-right: 4px solid transparent;
  border-top: 5px solid ${(p) => (p.$off ? '#d0d0d0' : '#222')};
`;

const ComboField = styled.div`
  flex: 1;
  height: 28px;
  display: flex;
`;

const ComboInput = styled.div`
  flex: 1;
  padding-left: 14px;
  line-height: 26px;
  background: #fff;
  border: 1px solid #d6d6d6;
  border-bottom: 1px solid #5f7d97;
  border-left: 1px solid #5f7d97;
  border-right: 1px solid #5f7d97;
`;

const ComboArrow = styled.div`
  width: 19px;
  display: flex;
  align-items: center;
  justify-content: center;
  background: #f4f6f9;
  border: 1px solid #d6d6d6;
  border-left: none;
  border-radius: 0 3px 3px 0;
`;

const LineHeading = styled.div`
  height: 20px;
  margin: 6px 8px 0 9px;
  display: flex;
  align-items: center;
  gap: 4px;
  padding-left: 16px;
  position: relative;
  font-size: 15px;
  white-space: nowrap;
  &::before {
    content: '';
    position: absolute;
    left: 0;
    width: 12px;
    height: 1px;
    background: #dcdfe4;
  }
  &::after {
    content: '';
    flex: 1;
    height: 1px;
    background: #dcdfe4;
  }
`;

const ContribRow = styled.div`
  display: flex;
  align-items: flex-start;
  margin-top: 2px;
  padding: 0 5px 0 6px;
  font-size: 15px;
`;

const ContribLabel = styled.div`
  width: 46px;
  flex: none;
  margin-top: 5px;
`;

const ContribCombo = styled.div`
  flex: 1;
  margin-top: 4px;
  display: flex;
`;

const PlainBtn = styled.div`
  width: 73px;
  height: 25px;
  margin-left: 11px;
  text-align: center;
  line-height: 20px;
  background: linear-gradient(#f3f3f3, #ececec);
  border: 2px solid #a9adb3;
  border-radius: 3px;
  font-size: 15px;
`;

const ChartArea = styled.div`
  flex: 1;
  min-height: 0;
  background: #fff;
  margin-top: 3px;
`;

const PlotText = styled.text`
  font-family: "Liberation Sans", sans-serif;
  font-size: ${(p) => p.$s || 15}px;
  fill: #1a1a1a;
`;

const MsgTabs = styled.div`
  height: 39px;
  flex: none;
  display: flex;
  align-items: flex-end;
  gap: 11px;
  margin: 0 0 0 4px;
  padding-right: 6px;
  border-bottom: 1px solid #d5dae2;
`;

const MsgTab = styled.div`
  width: ${(p) => p.$w}px;
  height: 32px;
  display: flex;
  align-items: center;
  justify-content: ${(p) => (p.$active ? 'flex-start' : 'center')};
  gap: 5px;
  padding-left: ${(p) => (p.$active ? 5 : 0)}px;
  font-size: 17px;
  color: ${(p) => (p.$active ? '#2a5a9c' : '#1a1a1a')};
  background: ${(p) => (p.$active ? '#fbfcff' : '#ececec')};
  ${(p) => p.$active && 'border: 1px solid #d5dae2; border-bottom: none; margin-bottom: -1px; height: 33px;'}
`;

const TabClose = styled.span`
  color: #d0d7e0;
  font-size: 15px;
`;

const MsgPin = styled.div`
  margin-left: auto;
  align-self: center;
  display: flex;
  gap: 9px;
  align-items: center;
  color: #cbd2db;
`;

const BroomBar = styled.div`
  height: 34px;
  flex: none;
  display: flex;
  align-items: center;
  padding-left: 11px;
`;

const LogBox = styled.div`
  height: 87px;
  margin: 0 6px 0 4px;
  padding: 0 2px;
  border: 1px solid #d5dae2;
  font-size: 15.7px;
`;

const StatusBar = styled.div`
  flex: none;
  height: 40px;
  margin-top: -1px;
  background: #f0eeee;
  border-bottom: 1px solid #a8a8a8;
  display: flex;
  align-items: center;
  padding-left: 1058px;
  font-size: 15px;
  position: relative;
`;

const Watermark = styled.div`
  position: absolute;
  right: 10px;
  top: 13px;
  font-family: "Liberation Sans", sans-serif;
  font-size: 19px;
  color: #a8a8a8;
  text-shadow: 1px 1px 0 #fff;
`;

const Marks = styled.svg`
  position: absolute;
  left: 0;
  top: 0;
  pointer-events: none;
`;

const quickIcons = ['new', 'open', 'save', 'saveAs', 'run', 'undo', 'redo', 'copy', 'paste', 'dup', 'trash', 'selBox', 'broom', 'find'];

const tabs = [
  ['主屏幕', 66, 5],
  ['定义', 52, 12],
  ['几何', 57, 9, true],
  ['材料', 44, 12],
  ['物理场', 66, 15],
  ['网格', 46, 15],
  ['研究', 44, 18],
  ['结果', 44, 18],
  ['开发工具', 62, 26],
];

const tree = [
  [0, 'open', 'root', 'Untitled.mph', 'root'],
  [1, 'open', 'globe', '全局定义'],
  [2, null, 'pi', '参数 1'],
  [2, null, 'mats', '材料'],
  [1, 'open', 'comp', '组件 1', 'comp1'],
  [2, 'open', 'defs', '定义'],
  [3, null, 'sys', '边界坐标系 1', 'sys1'],
  [3, 'closed', 'view', '视图 1'],
  [2, 'open', 'geom', '几何 1'],
  [3, null, 'geomC', '圆 1', 'c1'],
  [3, null, 'geomC', '圆 2', 'c2'],
  [3, null, 'arr', '阵列 1', 'arr1'],
  [3, null, 'mirror', '镜像 1', 'mir1'],
  [3, null, 'move', '移动 1', 'mov1'],
  [3, null, 'move', '移动 2', 'mov2'],
  [3, null, 'moveSel', '移动 3', 'mov3', true],
  [3, null, 'union', '形成联合体', 'fin'],
  [2, null, 'matsS', '材料'],
  [2, 'open', 'wave', '电磁波，频域', 'ewfd'],
  [3, null, 'domFull', '波动方程，电 1'],
  [3, null, 'domLine', '理想电导体 1'],
  [3, null, 'domFull', '初始值 1'],
  [2, null, 'mesh', '网格 1'],
  [1, 'open', 'study', '研究 1'],
  [2, null, 'step', '步骤 1: 模式分析'],
  [1, 'closed', 'results', '结果'],
];

const graphicsTools = [
  ['zoomIn'], ['zoomOut'], ['zoomBox'], ['zoomFit'], ['zoomExt'], ['s', 18],
  ['axes'], ['d', 21], ['s', 24],
  ['gEdit'], ['gCutSel'], ['gFill'], ['gBand'], ['gBand2'], ['gSlash'], ['s', 20],
  ['gBoxA'], ['gBoxB'], ['selBox'], ['broom'], ['s', 20],
  ['gEyeOff'], ['gEyeA'], ['gEyeB'], ['gEyeC'], ['gReset'], ['s', 21],
  ['gBan'], ['gPalette'], ['d', 14], ['s', 25],
  ['camera'], ['printer'],
];

const xVals = [-8, -6, -4, -2, 0, 2, 4, 6, 8];
const yVals = [6, 5, 4, 3, 2, 1, 0, -1, -2, -3, -4, -5, -6];
const X0 = 1507;
const Y0 = 558;
const UX = 42.25;
const UY = 42.17;
const topRow = [1343, 1409, 1474, 1540, 1605, 1670];
const blue = [1376, 1441, 1507, 1572, 1638];

const Plot = () => {
  const xt = [];
  for (let i = -9; i <= 9; i++) xt.push(i);
  const yt = [];
  for (let i = -6; i <= 6; i++) yt.push(i);
  return (
    <Svg width="842" height="576" viewBox="1062 279 842 576">
      <rect x="1124" y="289" width="766" height="538" fill="#f7fcff" />
      {xt.map((i) => (
        <path key={i} d={`M${X0 + i * UX} 289V827`} stroke="#e3edf3" />
      ))}
      {yt.map((i) => (
        <path key={i} d={`M1124 ${Y0 - i * UY}H1890`} stroke="#e3edf3" strokeWidth={1.5} />
      ))}
      {xt.map((i) => {
        const len = i % 2 === 0 ? 9 : 5;
        const x = X0 + i * UX;
        return <path key={i} d={`M${x} ${288 - len}V288M${x} 828V${828 + len}`} stroke="#777" strokeWidth="1.3" />;
      })}
      {yt.map((i) => {
        const y = Y0 - i * UY;
        return <path key={i} d={`M1115 ${y}H1123M1891 ${y}H1900`} stroke="#777" strokeWidth="1.5" />;
      })}
      <rect x="1123" y="288" width="768" height="540" fill="none" stroke="#777" strokeWidth="1.6" />
      <circle cx={X0} cy={Y0} r="226" fill="#c6c6c6" stroke="#333" strokeWidth="1.2" />
      {topRow.map((x) => (
        <g key={x}>
          <circle cx={x} cy="501" r="20" fill="none" stroke="#222" strokeWidth="1" />
          <circle cx={x} cy="615" r="20" fill="none" stroke="#222" strokeWidth="1" />
        </g>
      ))}
      <circle cx="1311" cy={Y0} r="20" fill="none" stroke="#222" strokeWidth="1" />
      <circle cx="1703" cy={Y0} r="20" fill="none" stroke="#222" strokeWidth="1" />
      {blue.map((x) => (
        <circle key={x} cx={x} cy={Y0} r="20" fill="#b2b2f2" stroke="#1414ee" strokeWidth="1" />
      ))}
      <rect x="1345.5" y="500.5" width="336" height="100" fill="none" stroke="#ff3a3a" strokeWidth="7" />
      {xVals.map((v) => (
        <PlotText key={v} x={X0 + v * UX + (v < 0 ? 8 : 6)} y="848" textAnchor="middle" $s={16}>{v}</PlotText>
      ))}
      {yVals.map((v) => (
        <PlotText key={v} x="1113" y={Y0 - v * UY + 13} textAnchor="end" $s={16}>{v}</PlotText>
      ))}
      <PlotText x="1127" y="307" $s={16}>×10</PlotText>
      <PlotText x="1158" y="299" $s={9}>-5</PlotText>
      <PlotText x="1128" y="325" $s={14}>m</PlotText>
      <PlotText x="1825" y="823" $s={16}>×10</PlotText>
      <PlotText x="1857" y="815" $s={9}>-5</PlotText>
      <PlotText x="1874" y="823" $s={14}>m</PlotText>
      <path d="M1835 834l5-5 5 5z" fill="#111" />
      <path d="M1119 545l5 5-5 5z" fill="#111" />
      <g transform="translate(1862 297)">
        <rect width="18" height="18" rx="5" fill="#dfe6f0" />
        <rect x="4" y="4" width="10" height="10" rx="1" fill="#1c5aa8" />
        <path d="M10 4h4v10h-4z" fill="#f0c419" />
      </g>
    </Svg>
  );
};

const App = () => (
  <Window>
    <GlobalStyle />
    <TitleBar>
      <QuickBar>
        <QuickCell><Icon n="app" /></QuickCell>
        <QuickSep $m={4} />
        <QuickCell $w={32}><Icon n={quickIcons[0]} /></QuickCell>
        {quickIcons.slice(1).map((n) => (
          <QuickCell key={n} $w={29}><Icon n={n} /></QuickCell>
        ))}
        <QuickCell $w={16}><DropMark /></QuickCell>
        <QuickSep $m={3} />
      </QuickBar>
      <WindowTitle>Untitled.mph - COMSOL Multiphysics</WindowTitle>
      <WinControls>
        <WinButton>
          <Svg width="12" height="2"><path d="M0 1h12" stroke="#999" /></Svg>
        </WinButton>
        <WinButton $on>
          <Svg width="12" height="13"><path d="M3 3V1h8v9H9M1 3h8v9H1z" fill="none" stroke="#111" /></Svg>
        </WinButton>
        <WinButton>
          <Svg width="13" height="13"><path d="M0 0l13 13M13 0L0 13" stroke="#888" /></Svg>
        </WinButton>
      </WinControls>
    </TitleBar>

    <Body>
      <TabBar>
        <FileTab>文件 <Icon n="tri" /></FileTab>
        {tabs.map(([label, w, ml, active]) => (
          <Tab key={label} $w={w} $ml={ml} $active={active}>{label}</Tab>
        ))}
        <HelpBtn>?</HelpBtn>
      </TabBar>

      <Ribbon>
        <RibbonGroup $w={81}>
          <GroupBody>
            <BigBtn $w={81}>
              <BigIcon><Icon n="buildAll" /></BigIcon>
              <BigText>全部构建</BigText>
            </BigBtn>
          </GroupBody>
          <GroupLabel>构建</GroupLabel>
        </RibbonGroup>

        <RibbonGroup $w={105}>
          <GroupBody $pl={10}>
            <SmallCol $w={90}>
              <SmallBtn><SmallIcon $w={24}><Icon n="imp" /></SmallIcon>导入</SmallBtn>
              <SmallBtn><SmallIcon $w={24}><Icon n="insert" /></SmallIcon>插入序列</SmallBtn>
              <SmallBtn><SmallIcon $w={24}><Icon n="exp" /></SmallIcon>导出</SmallBtn>
            </SmallCol>
          </GroupBody>
          <GroupLabel>导入/导出</GroupLabel>
        </RibbonGroup>

        <RibbonGroup $w={84}>
          <GroupBody>
            <BigBtn $w={84}>
              <BigIcon><Icon n="glasses" /></BigIcon>
              <BigText>虚拟操作</BigText>
              <DropMark />
            </BigBtn>
          </GroupBody>
          <GroupLabel>清理</GroupLabel>
        </RibbonGroup>

        <RibbonGroup $w={122}>
          <GroupBody>
            <SnapCol>
              <SnapBtn $w={106}><SnapIcon><Icon n="snapGrid" /></SnapIcon>捕捉到栅格</SnapBtn>
              <SnapBtn $w={106}><SnapIcon><Icon n="snapGeo" /></SnapIcon>捕捉到几何</SnapBtn>
              <SnapBtn $w={60}><SnapIcon><Icon n="solid" /></SnapIcon>实体</SnapBtn>
            </SnapCol>
          </GroupBody>
          <GroupLabel>绘图设置</GroupLabel>
        </RibbonGroup>

        <RibbonGroup $w={243}>
          <GroupBody $pl={12}>
            <BigBtn $w={50}>
              <BigIcon><Icon n="line" /></BigIcon>
              <BigText>线</BigText>
            </BigBtn>
            <SmallCol $w={64}>
              <SmallBtn><SmallIcon $w={28}><Icon n="quad" /></SmallIcon>二次</SmallBtn>
              <SmallBtn><SmallIcon $w={28}><Icon n="cubic" /></SmallIcon>三次</SmallBtn>
              <SmallBtn><SmallIcon $w={28}><Icon n="point" /></SmallIcon>点</SmallBtn>
            </SmallCol>
            <BigBtn $w={52}>
              <BigIcon><Icon n="rect" /></BigIcon>
              <BigText>矩形</BigText>
              <DropMark />
            </BigBtn>
            <BigBtn $w={56}>
              <BigIcon><Icon n="circle" /></BigIcon>
              <BigText>圆</BigText>
              <DropMark />
            </BigBtn>
          </GroupBody>
          <GroupLabel>绘图</GroupLabel>
        </RibbonGroup>

        <RibbonGroup $w={71}>
          <GroupBody>
            <BigBtn $w={71}>
              <BigIcon><Icon n="voxel" /></BigIcon>
              <BigText>体素</BigText>
              <DropMark />
            </BigBtn>
          </GroupBody>
          <GroupLabel>体素</GroupLabel>
        </RibbonGroup>

        <RibbonGroup $w={390}>
          <GroupBody $pl={6}>
            <BigBtn $w={120}>
              <BigIcon><Icon n="bool" /></BigIcon>
              <BigText>布尔操作和分割</BigText>
              <DropMark />
            </BigBtn>
            <BigBtn $w={48}>
              <BigIcon><Icon n="transform" /></BigIcon>
              <BigText>变换</BigText>
              <DropMark />
            </BigBtn>
            <BigBtn $w={42} $ml={10}>
              <BigIcon><Icon n="convert" /></BigIcon>
              <BigText>转换</BigText>
              <DropMark />
            </BigBtn>
            <SmallCol $w={67} $ml={3}>
              <SmallBtn><SmallIcon $w={30}><Icon n="chamfer" /></SmallIcon>倒角</SmallBtn>
              <SmallBtn><SmallIcon $w={30}><Icon n="fillet" /></SmallIcon>圆角</SmallBtn>
              <SmallBtn><SmallIcon $w={30}><Icon n="tangent" /></SmallIcon>切线</SmallBtn>
            </SmallCol>
            <SmallCol $w={90}>
              <SmallBtn><SmallIcon $w={23}><Icon n="del" /></SmallIcon>删除</SmallBtn>
              <SmallBtn $off><SmallIcon $w={23}><Icon n="edit" /></SmallIcon>编辑对象</SmallBtn>
              <SmallBtn $off><SmallIcon $w={23}><Icon n="section" /></SmallIcon>横截面</SmallBtn>
            </SmallCol>
          </GroupBody>
          <GroupLabel>操作</GroupLabel>
        </RibbonGroup>

        <RibbonGroup $w={358}>
          <GroupBody $pl={8}>
            <BigBtn $w={56}>
              <BigIcon><Icon n="part" /></BigIcon>
              <BigText>零件</BigText>
              <DropMark />
            </BigBtn>
            <BigBtn $w={54}>
              <BigIcon><Icon n="prog" /></BigIcon>
              <BigText>编程</BigText>
              <DropMark />
            </BigBtn>
            <BigBtn $w={54}>
              <BigIcon><Icon n="select" /></BigIcon>
              <BigText>选择</BigText>
              <DropMark />
            </BigBtn>
            <BigBtn $w={56}>
              <BigIcon><Icon n="palette" /></BigIcon>
              <BigText>颜色</BigText>
              <DropMark />
            </BigBtn>
            <BigBtn $w={58}>
              <BigIcon><Icon n="measure" /></BigIcon>
              <BigText>测量</BigText>
            </BigBtn>
            <BigBtn $w={62}>
              <BigIcon><Icon n="delSeq" /></BigIcon>
              <BigText>删除序列</BigText>
            </BigBtn>
          </GroupBody>
          <GroupLabel>其他</GroupLabel>
        </RibbonGroup>
      </Ribbon>

      <Workspace>
        <Panel $w={413}>
          <PanelHead $h={38} $pt={4}>
            <PanelTitle>模型开发器</PanelTitle>
            <PanelTools><Icon n="tri" /><Icon n="pin" /></PanelTools>
          </PanelHead>
          <IconBar $h={24} $pl={3}>
            <IconCell><Icon n="leftA" /></IconCell>
            <IconCell><Icon n="rightA" /></IconCell>
            <IconCell><Icon n="upA" /></IconCell>
            <IconCell><Icon n="downA" /></IconCell>
            <IconCell><Icon n="eye" /></IconCell>
            <IconCell $w={20}><Icon n="tri" /></IconCell>
            <IconCell $w={36}><Icon n="listUp" /></IconCell>
            <IconCell><Icon n="listDown" /></IconCell>
            <IconCell><Icon n="listAll" /></IconCell>
            <IconCell $w={17}><Icon n="tri" /></IconCell>
          </IconBar>
          <TreeBox>
            {tree.map(([level, state, icon, label, tag, sel], i) => (
              <TreeRow key={i} $level={level} $sel={sel}>
                <TreeToggle>
                  {state === 'open' && <Opened />}
                  {state === 'closed' && <Closed />}
                </TreeToggle>
                <TreeIcon><Icon n={icon} /></TreeIcon>
                <TreeText>{label}</TreeText>
                {tag && <TreeTag>({tag})</TreeTag>}
              </TreeRow>
            ))}
          </TreeBox>
        </Panel>

        <Panel $w={620}>
          <PanelHead $h={42} $pl={10} $pr={6}>
            <PanelTitle $color="#2196e8">设置</PanelTitle>
            <PanelTools $dark><Icon n="tri" /><Icon n="pin" /></PanelTools>
          </PanelHead>
          <Subtitle>移动</Subtitle>
          <BuildBar>
            <BuildItem><Icon n="buildSel" />构建选定对象</BuildItem>
            <BuildItem $ml={7}><Icon n="tri" /></BuildItem>
            <BuildItem $ml={15}><Icon n="buildAllS" />构建所有对象</BuildItem>
            <BuildItem $ml={11}><Icon n="buildInd" /></BuildItem>
          </BuildBar>
          <FormRow $mt={18}>
            <RowLabel $w={46}>标签:</RowLabel>
            <TextField>移动 3</TextField>
            <SquareBtn $ml={12}><Icon n="labelBtn" /></SquareBtn>
          </FormRow>
          <SectionHead $mt={13}><Icon n="tri" />输入</SectionHead>
          <FormRow $mt={13} $h={20}>输入对象:</FormRow>
          <InputArea>
            <ToggleCol>
              <ToggleBtn><Icon n="toggle" /></ToggleBtn>
              <ToggleText>激活</ToggleText>
            </ToggleCol>
            <ObjectList>
              {['arr1(1,1)', 'arr1(2,1)', 'arr1(3,1)', 'mir1(1)', 'mir1(2)'].map((t) => (
                <ObjectItem key={t}>{t}</ObjectItem>
              ))}
            </ObjectList>
            <ListTools>
              <Icon n="copy" /><Icon n="addPlus" />
              <Icon n="paste" /><Icon n="minus" />
              <Icon n="focus" /><Icon n="broom" />
            </ListTools>
          </InputArea>
          <CheckRow $mt={9} $pl={7}>
            <CheckBox><Icon n="check" /></CheckBox>
            保留输入对象
          </CheckRow>
          <SectionHead $mt={14}><Icon n="tri" />位移</SectionHead>
          <FormRow $mt={15}>
            <RowLabel $w={25}>x:</RowLabel>
            <TextField>0</TextField>
            <Unit>m</Unit>
            <SquareBtn><Icon n="tiny" /></SquareBtn>
          </FormRow>
          <FormRow $mt={13}>
            <RowLabel $w={25}>y:</RowLabel>
            <TextField>2*werticle</TextField>
            <Unit>m</Unit>
            <SquareBtn><Icon n="tiny" /></SquareBtn>
          </FormRow>
          <SectionHead $mt={16}><Icon n="tri" />结果实体的选择</SectionHead>
          <Fields>
            <FieldsLegend>
              <CheckRow>
                <CheckBox />
                产生的对象选择
              </CheckRow>
            </FieldsLegend>
            <FieldRow $h={26}>
              <RowLabel $w={123} $muted>在物理场中显示:</RowLabel>
              <Combo $off $h={26}>域选择<ComboCaret $off /></Combo>
            </FieldRow>
            <FieldRow $h={28} $mt={8}>
              <RowLabel $w={123} $muted>颜色:</RowLabel>
              <ComboField>
                <ComboInput>无</ComboInput>
                <ComboArrow><ComboCaret /></ComboArrow>
              </ComboField>
            </FieldRow>
          </Fields>
          <LineHeading>累积选择</LineHeading>
          <ContribRow>
            <ContribLabel>贡献:</ContribLabel>
            <ContribCombo>
              <Combo $h={24}>无<ComboCaret /></Combo>
            </ContribCombo>
            <PlainBtn>新建</PlainBtn>
          </ContribRow>
        </Panel>

        <RightCol>
          <Panel $w={844} $h={669}>
            <PanelHead $h={38} $pt={4} $pl={10} $pr={6}>
              <PanelTitle>图形</PanelTitle>
              <PanelTools><Icon n="tri" /><Icon n="pin" /></PanelTools>
            </PanelHead>
            <IconBar $h={50} $pl={1}>
              {graphicsTools.map(([n, w], i) =>
                n === 's' ? (
                  <BarSep key={i} $w={w} />
                ) : n === 'd' ? (
                  <IconCell key={i} $w={w}><Icon n="tri" /></IconCell>
                ) : (
                  <IconCell key={i}><Icon n={n} /></IconCell>
                ),
              )}
            </IconBar>
            <ChartArea><Plot /></ChartArea>
          </Panel>
          <Panel $w={844} $h={168}>
            <MsgTabs>
              <MsgTab $active $w={69}>消息<TabClose>✕</TabClose></MsgTab>
              <MsgTab $w={44}>进度</MsgTab>
              <MsgTab $w={44}>日志</MsgTab>
              <MsgPin><Icon n="tri" /><Icon n="pin" /></MsgPin>
            </MsgTabs>
            <BroomBar><Icon n="broomOnly" /></BroomBar>
            <LogBox>COMSOL Multiphysics 5.4.0.388</LogBox>
          </Panel>
        </RightCol>
      </Workspace>

      <StatusBar>
        665 MB | 1009 MB
        <Watermark>CSDN @Leisureconfused</Watermark>
      </StatusBar>
    </Body>

    <Marks width="1918" height="1077" viewBox="0 0 1918 1077">
      <g fill="#fa3737">
        <polygon points="520,281 530,298 527,297 532,352 522,297 514,298" />
        <polygon points="464,581 481,585 477,590 518,623 470,593 467,597" />
        <polygon points="570,697 584,690 585,692 689,692 587,702 586,705" />
      </g>
    </Marks>
  </Window>
);

export default App;
